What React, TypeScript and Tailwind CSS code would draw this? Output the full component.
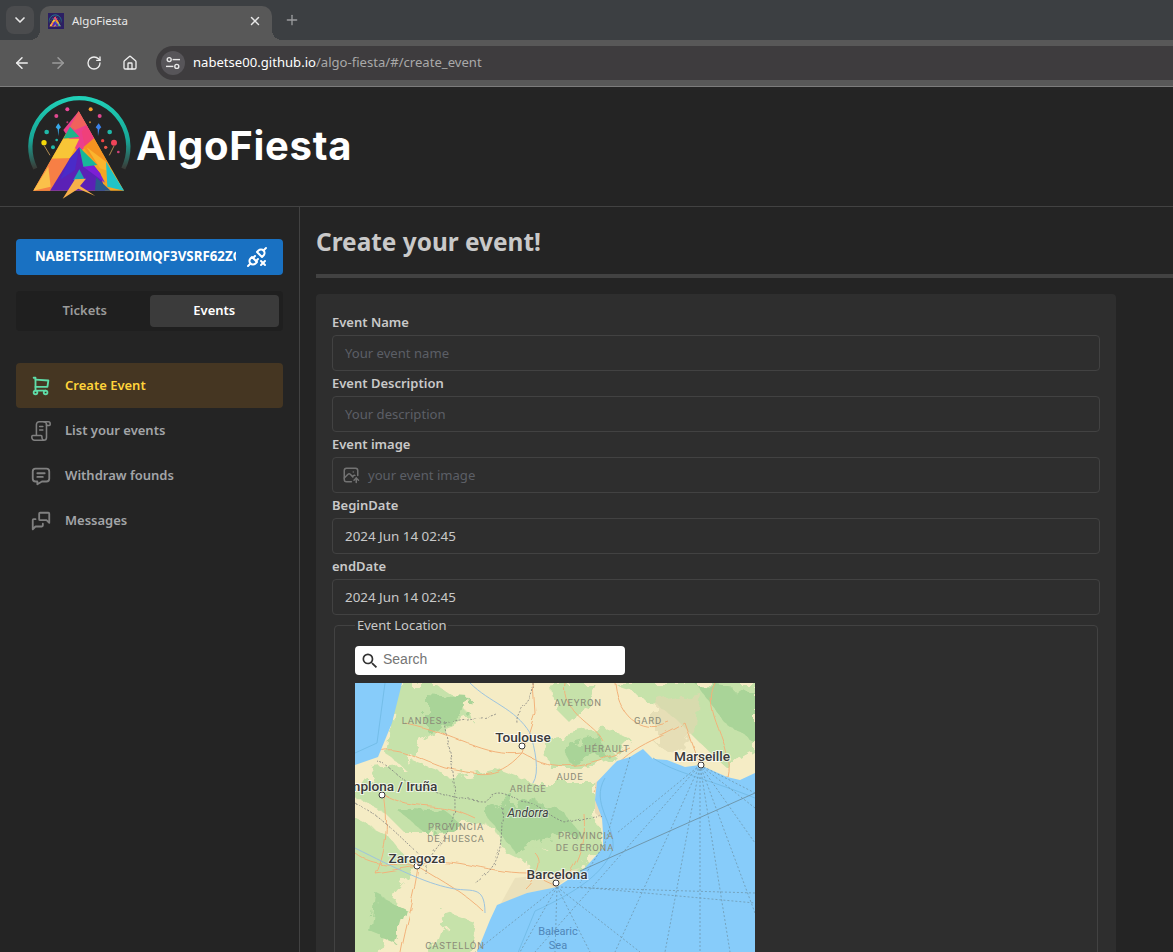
import React from 'react';
import { ArrowLeft, ArrowRight, ChevronDown, Home, Plus, RotateCw, X } from 'lucide-react';
import { MdSearch } from 'react-icons/md';
import { TbMessage, TbMessages, TbPhotoUp, TbPlugConnectedX, TbShoppingCart } from 'react-icons/tb';

const LogoMark: React.FC<{ className?: string }> = ({ className }) => (
  <svg viewBox="0 0 390 345" className={className}>
    <defs>
      <linearGradient id="arc" x1="0" y1="0" x2="0" y2="1">
        <stop offset="0" stopColor="#20d0b8" />
        <stop offset="0.6" stopColor="#17a596" />
        <stop offset="1" stopColor="#3a3a36" />
      </linearGradient>
    </defs>
    <path d="M46 236 A147 147 0 1 1 310 236" fill="none" stroke="url(#arc)" strokeWidth="13" />
    {/* confetti */}
    <circle cx="142" cy="58" r="6" fill="#ec4899" />
    <circle cx="212" cy="58" r="6" fill="#f59e2b" />
    <circle cx="109" cy="78" r="6" fill="#e0488f" />
    <circle cx="239" cy="78" r="6" fill="#e0488f" />
    <circle cx="142" cy="97" r="3" fill="#c03878" />
    <circle cx="210" cy="97" r="3" fill="#c08030" />
    <circle cx="80" cy="126" r="7" fill="#20b8a8" />
    <circle cx="269" cy="126" r="7" fill="#20b8a8" />
    <circle cx="110" cy="150" r="4" fill="#20b8a8" />
    <circle cx="248" cy="152" r="5" fill="#ef4444" />
    <circle cx="99" cy="172" r="6" fill="#20b8a8" />
    <circle cx="257" cy="172" r="5" fill="#ef5a4a" />
    <circle cx="295" cy="186" r="4" fill="#d0407a" />
    <circle cx="72" cy="158" r="8" fill="#f5d90a" />
    <circle cx="282" cy="158" r="9" fill="#ef4458" />
    <path d="M72 166 L90 196 M282 168 L268 196" stroke="#b08a50" strokeWidth="3" />
    <path d="M115 100 l8 12 l-6 6 l-2 20 l-2 -20 l-6 -6z" fill="#38a8e8" />
    <path d="M236 100 l8 12 l-6 6 l-4 20 l-1 -20 l-6 -6z" fill="#3b82e8" />
    {/* triangle */}
    <polygon points="176,64 312,302 40,302" fill="#f5a623" />
    <polygon points="176,64 222,145 176,190 130,120" fill="#ec3f8c" />
    <polygon points="176,64 200,105 165,120 150,110" fill="#f0625c" />
    <polygon points="200,105 222,145 195,170 185,125" fill="#f0407a" />
    <polygon points="150,110 178,140 130,146" fill="#1fb58a" />
    <polygon points="130,146 178,146 150,205 95,206" fill="#f8c537" />
    <polygon points="95,206 150,205 120,302 40,302" fill="#f77f45" />
    <polygon points="40,302 92,290 85,230" fill="#fbc04a" />
    <polygon points="178,172 240,250 255,302 90,302 150,205" fill="#5b21b6" />
    <polygon points="150,205 178,172 165,240 120,270" fill="#4a2bc8" />
    <polygon points="178,172 190,230 255,278 240,250" fill="#7c1fd6" />
    <polygon points="178,172 232,225 190,230" fill="#18b79a" />
    <polygon points="222,145 270,230 232,225 190,172" fill="#f59320" />
    <polygon points="200,172 258,215 270,245 240,235" fill="#fbb52e" />
    <polygon points="258,215 312,302 262,290" fill="#20c4c8" />
    <polygon points="228,262 272,302 225,302" fill="#2c5a8c" />
    <polygon points="178,238 195,270 160,270" fill="#1f9fb0" />
    <polygon points="165,268 198,266 180,288 226,318 175,296 128,326" fill="#f8b04a" />
  </svg>
);

const SiteTune = () => (
  <svg viewBox="0 0 16 16" className="w-4 h-4" fill="none" stroke="#e8e8e8" strokeWidth="1.4">
    <circle cx="4.2" cy="4.6" r="2" />
    <path d="M7.6 4.6H15" />
    <circle cx="11.8" cy="11.4" r="2" />
    <path d="M1 11.4h7.4" />
  </svg>
);

const ScrollIcon: React.FC<{ className?: string }> = ({ className }) => (
  <svg viewBox="0 0 24 24" className={className} fill="none" stroke="currentColor" strokeWidth="1.7" strokeLinecap="round" strokeLinejoin="round">
    <path d="M18 5v14a3 3 0 0 1-3 3H5a3 3 0 0 1-3-3v-1a1 1 0 0 1 1-1h9a1 1 0 0 1 1 1v1a3 3 0 0 0 2 3" />
    <path d="M7 16V5a3 3 0 0 1 3-3h10a2 2 0 0 1 2 2v1a1 1 0 0 1-1 1h-3" />
    <path d="M18 5a3 3 0 0 0-3-3" />
    <path d="M10.5 7H14M10.5 11H14" />
  </svg>
);

const BrowserChrome = () => (
  <div className="shrink-0 font-['Noto_Sans',sans-serif]">
    <div className="h-10 bg-[#3c3f42] flex pt-1.5 pl-1.5">
      <div className="w-7 h-7 rounded-lg bg-[#4b4c4e] flex items-center justify-center">
        <ChevronDown className="w-4 h-4 text-[#e8e8e8]" strokeWidth={2.5} />
      </div>
      <div className="relative ml-1.5 w-[232px] h-[34px] bg-[#585858] rounded-t-[10px] flex items-center pl-2 pr-2.5 pb-1 before:absolute before:-left-2.5 before:bottom-0 before:w-2.5 before:h-2.5 before:bg-[radial-gradient(circle_at_0_0,transparent_10px,#585858_10px)] after:absolute after:-right-2.5 after:bottom-0 after:w-2.5 after:h-2.5 after:bg-[radial-gradient(circle_at_100%_0,transparent_10px,#585858_10px)]">
        <div className="w-4 h-4 bg-[#2b1f63] flex items-center justify-center">
          <LogoMark className="w-4 h-4" />
        </div>
        <span className="ml-2 text-[11.5px] text-[#e8e8e8]">AlgoFiesta</span>
        <X className="ml-auto w-3.5 h-3.5 text-[#e8e8e8]" strokeWidth={2.5} />
      </div>
      <Plus className="ml-[12px] mt-1.5 w-4 h-4 text-[#9a9c9e]" strokeWidth={2} />
    </div>
    <div className="h-[47px] bg-[#585858] border-b border-[#7c7c7c] flex items-center pl-1">
      <div className="w-9 flex justify-center"><ArrowLeft className="w-[18px] h-[18px] text-[#eeeeee]" strokeWidth={2} /></div>
      <div className="w-9 flex justify-center"><ArrowRight className="w-[18px] h-[18px] text-[#9a9a9a]" strokeWidth={2} /></div>
      <div className="w-9 flex justify-center"><RotateCw className="w-4 h-4 text-[#eeeeee]" strokeWidth={2} /></div>
      <div className="w-9 flex justify-center"><Home className="w-4 h-4 text-[#eeeeee]" strokeWidth={2} /></div>
      <div className="ml-2 flex-1 h-[34px] bg-[#3e3c3e] rounded-l-full flex items-center pl-[5px]">
        <div className="w-6 h-6 rounded-full bg-[#575559] flex items-center justify-center">
          <SiteTune />
        </div>
        <span className="ml-2 text-[13.1px] text-white">nabetse00.github.io<span className="text-[#a9a9a9]">/algo-fiesta/#/create_event</span></span>
      </div>
    </div>
  </div>
);

const SideNav = () => {
  const items = [
    { label: 'Create Event', icon: TbShoppingCart, active: true },
    { label: 'List your events', icon: ScrollIcon },
    { label: 'Withdraw founds', icon: TbMessage },
    { label: 'Messages', icon: TbMessages },
  ];

  return (
    <aside className="w-[300px] shrink-0 border-r border-[#424242] px-4 pt-8 bg-[#242424]">
      <div className="h-9 bg-[#1971c2] rounded flex items-center pl-[19px] pr-[14px]">
        <span className="w-[201px] overflow-hidden whitespace-nowrap text-[13.3px] font-bold text-white">NABETSEIIMEOIMQF3VSRF62ZGW4</span>
        <TbPlugConnectedX className="ml-auto w-6 h-6 text-white" />
      </div>
      <div className="mt-4 h-10 bg-[#1f1f1f] rounded p-1 flex text-[13px] font-semibold">
        <div className="flex-1 flex items-center justify-center text-[#9b9b9b]">Tickets</div>
        <div className="flex-1 flex items-center justify-center text-white bg-[#3b3b3b] rounded">Events</div>
      </div>
      <nav className="mt-8">
        {items.map((item) => (
          <div
            key={item.label}
            className={`h-[45px] rounded flex items-center pl-[14px] text-[13px] font-semibold ${
              item.active ? 'bg-[#453622] text-[#ffd43b]' : 'text-[#a3a5a8]'
            }`}
          >
            <item.icon className={`w-[22px] h-[22px] ${item.active ? 'text-[#5fdca8]' : 'text-[#808080]'}`} />
            <span className="ml-[13px]">{item.label}</span>
          </div>
        ))}
      </nav>
    </aside>
  );
};

const Field: React.FC<{ label: string; placeholder?: string; value?: string; icon?: boolean }> = ({ label, placeholder, value, icon }) => (
  <div>
    <div className="h-[25px] flex items-center text-[13px] font-semibold text-[#c9c9c9]">{label}</div>
    <div className="h-9 border border-[#424242] rounded flex items-center pl-3">
      {icon && <TbPhotoUp className="w-[18px] h-[18px] mr-2 -ml-[3px] text-[#737373]" />}
      {value ? <span className="text-[13.4px] text-[#c9c9c9]">{value}</span> : <span className="pt-px text-[13.1px] text-[#5c5f66]">{placeholder}</span>}
    </div>
  </div>
);

const Label: React.FC<{ x: number; y: number; children: string; kind?: 'city' | 'region' | 'italic' | 'sea' }> = ({ x, y, children, kind = 'region' }) => {
  if (kind === 'city') {
    return <text x={x} y={y} textAnchor="middle" fontSize="13.6" fontWeight="500" fill="#3a3a3a" stroke="#ffffff" strokeOpacity="0.7" strokeWidth="2" paintOrder="stroke">{children}</text>;
  }
  if (kind === 'italic') {
    return <text x={x} y={y} textAnchor="middle" fontSize="12" fontStyle="italic" fill="#3e3e3e" stroke="#ffffff" strokeOpacity="0.5" strokeWidth="2" paintOrder="stroke">{children}</text>;
  }
  if (kind === 'sea') {
    return <text x={x} y={y} textAnchor="middle" fontSize="11" fill="#4f86b8">{children}</text>;
  }
  return <text x={x} y={y} textAnchor="middle" fontSize="9.5" letterSpacing="0.8" fill="#8b8b78">{children}</text>;
};

const MapView = () => {
  const ferries = [
    'M345 82 L400 110', 'M345 82 L400 125', 'M345 82 L400 160', 'M345 82 L400 230', 'M345 82 L375 269',
    'M345 82 L345 269', 'M345 82 L310 269', 'M345 82 L260 269', 'M345 82 L180 269', 'M345 82 L262 150',
    'M275 74 L250 160 L225 200', 'M202 204 L165 269', 'M202 204 L200 269', 'M202 204 L235 269', 'M202 204 L285 269',
    'M202 204 L400 210', 'M225 204 L400 220', 'M202 204 L120 269',
  ];
  const roads = [
    'M167 70 C130 75 100 50 50 40', 'M167 70 C140 100 120 90 90 85 C60 75 40 60 20 70', 'M167 70 C200 90 230 85 275 65',
    'M167 70 L180 30 L178 0', 'M28 111 C35 150 25 180 20 190 L63 183',
    'M63 183 C90 170 130 190 172 190 L202 204', 'M63 183 C60 210 50 240 45 269', 'M63 183 C90 200 110 210 130 230',
    'M228 130 C230 160 225 180 205 200', 'M28 111 C60 130 80 115 120 135', 'M240 110 C270 60 300 60 330 40 L345 82',
    'M260 0 C265 40 290 50 315 40', 'M360 0 C345 30 380 60 372 94', 'M0 170 C20 185 40 180 63 183',
    'M180 170 C190 180 180 195 170 205', 'M210 0 C205 30 240 40 250 60',
  ];
  const borders = [
    'M22 78 C40 85 45 100 70 105 C90 112 110 118 130 118 C140 105 150 110 165 118 C185 120 190 132 210 140 C230 135 245 130 248 135',
    'M90 40 C110 35 130 35 140 30', 'M90 40 C95 70 100 90 100 125 C95 160 70 170 70 190',
    'M148 125 C145 160 150 180 120 200', 'M0 120 C30 135 45 155 63 170', 'M178 0 C180 20 160 25 162 40',
  ];

  return (
    <div className="mt-2 w-[400px] h-[400px] bg-[#f5ecc5]">
      <svg viewBox="0 0 400 400" className="w-full h-full block font-['Roboto',sans-serif]">
        <defs>
          <filter id="rough" x="-10%" y="-10%" width="120%" height="120%">
            <feTurbulence type="fractalNoise" baseFrequency="0.07" numOctaves="3" seed="4" />
            <feDisplacementMap in="SourceGraphic" scale="20" />
          </filter>
          <filter id="wiggle" x="-10%" y="-10%" width="120%" height="120%">
            <feTurbulence type="fractalNoise" baseFrequency="0.05" numOctaves="2" seed="9" />
            <feDisplacementMap in="SourceGraphic" scale="6" />
          </filter>
        </defs>
        {/* vegetation */}
        <g fill="#c6e2aa" filter="url(#rough)">
          <polygon points="40,0 80,0 110,20 115,35 90,45 65,60 50,85 30,70" />
          <polygon points="260,0 400,0 400,70 372,85 345,60 320,35 300,20 275,10" />
          <polygon points="195,0 240,0 230,25 215,40 200,25" />
          <polygon points="190,55 255,45 275,55 255,75 225,85 195,85" />
          <polygon points="20,85 60,80 100,95 140,85 180,100 240,100 240,135 245,150 250,170 225,185 190,165 170,180 150,170 140,145 110,135 90,150 50,150 30,130 0,115" />
          <polygon points="-10,130 30,150 60,185 40,210 20,290 70,290 90,230 120,240 110,290 -10,290" />
          <polygon points="170,165 235,170 225,190 195,195 175,190" />
        </g>
        <g fill="#a9d498" filter="url(#rough)">
          <polygon points="72,12 115,15 112,30 90,42 72,50" />
          <polygon points="130,130 160,115 205,125 225,150 190,155 160,170 145,150" />
          <polygon points="40,125 90,128 110,145 70,150" />
          <polygon points="205,62 245,52 252,70 215,80" />
          <polygon points="340,0 400,10 400,60 370,40" />
          <polygon points="20,210 50,225 40,260 15,250" />
        </g>
        <polygon points="240,100 262,82 270,75 250,120 252,140 240,130" fill="#ead9b5" />
        <polygon points="300,20 345,10 340,50 320,70 300,60" fill="#e0d9b0" opacity="0.7" filter="url(#rough)" />
        <polygon points="200,205 172,210 145,222 160,195 205,190 225,185" fill="#e8dfb8" opacity="0.8" />
        <g fill="none" stroke="#f2b27a" strokeWidth="1" filter="url(#wiggle)">
          {roads.map((d) => <path key={d} d={d} />)}
        </g>
        <path d="M115 0 C135 20 160 25 175 50 C180 65 185 90 178 100 M0 165 C40 185 70 200 95 205 C115 210 130 200 130 230" fill="none" stroke="#9dc4df" strokeWidth="1" />
        {/* water */}
        <polygon points="0,0 47,0 37,40 23,74 0,82" fill="#87ccfa" />
        <polygon points="400,90 385,97 372,94 345,82 330,84 312,77 298,76 288,66 275,74 262,78 258,82 242,99 240,117 247,135 248,150 248,165 228,187 202,204 172,210 142,222 135,237 122,269 110,400 400,400" fill="#87ccfa" />
        <path d="M30 0 L22 60 L0 70 M298 75 C320 90 350 95 400 115 M250 95 C235 120 260 140 258 165 C250 190 220 210 180 228 L110 400" fill="none" stroke="#74bde8" strokeWidth="1" />
        <g fill="none" stroke="#6f98ae" strokeWidth="0.8" strokeDasharray="2 2">
          {ferries.map((d) => <path key={d} d={d} />)}
        </g>
        <path d="M400 110 L225 188" fill="none" stroke="#6f98ae" strokeWidth="1" />
        <g fill="none" stroke="#7a7a7a" strokeWidth="1" strokeDasharray="2 1.5" opacity="0.75" filter="url(#wiggle)">
          {borders.map((d) => <path key={d} d={d} />)}
        </g>
        <g fill="#ffffff" stroke="#3a3a3a" strokeWidth="1">
          <circle cx="167" cy="63" r="3" />
          <circle cx="346" cy="82" r="3" />
          <circle cx="27" cy="112" r="3" />
          <circle cx="62" cy="183" r="3" />
          <circle cx="201" cy="200" r="3" />
        </g>
        <Label x={223} y={23}>AVEYRON</Label>
        <Label x={293} y={41}>GARD</Label>
        <Label x={67} y={41}>LANDES</Label>
        <Label x={252} y={69}>HÉRAULT</Label>
        <Label x={215} y={97}>AUDE</Label>
        <Label x={173} y={109}>ARIÈGE</Label>
        <Label x={101} y={147}>PROVINCIA</Label>
        <Label x={101} y={159}>DE HUESCA</Label>
        <Label x={231} y={156}>PROVINCIA</Label>
        <Label x={230} y={168}>DE GERONA</Label>
        <Label x={100} y={266}>CASTELLÓN</Label>
        <Label x={168} y={59} kind="city">Toulouse</Label>
        <Label x={347} y={78} kind="city">Marseille</Label>
        <Label x={30} y={108} kind="city">Pamplona / Iruña</Label>
        <Label x={62} y={180} kind="city">Zaragoza</Label>
        <Label x={202} y={196} kind="city">Barcelona</Label>
        <Label x={173} y={134} kind="italic">Andorra</Label>
        <Label x={203} y={252} kind="sea">Balearic</Label>
        <Label x={203} y={266} kind="sea">Sea</Label>
      </svg>
    </div>
  );
};

const CreateEvent = () => (
  <main className="flex-1 min-w-0 pt-4 pl-4 overflow-hidden">
    <h1 className="h-[38px] flex items-center text-[24.4px] font-bold text-[#c9c9c9]">Create your event!</h1>
    <div className="mt-[13px] h-1 bg-[#424242]" />
    <section className="mt-4 w-[800px] bg-[#2e2e2e] rounded pt-4 px-4">
      <Field label="Event Name" placeholder="Your event name" />
      <Field label="Event Description" placeholder="Your description" />
      <Field label="Event image" placeholder="your event image" icon />
      <Field label="BeginDate" value="2024 Jun 14 02:45" />
      <Field label="endDate" value="2024 Jun 14 02:45" />
      <fieldset className="mx-[2px] border border-[#424242] rounded pl-5 pr-5 pt-[11px]">
        <legend className="px-[2px] text-[13px] leading-[20px] text-[#c9c9c9]">Event Location</legend>
        <div className="w-[270px] h-[29px] bg-white rounded flex items-center pl-[6px] font-['Liberation_Sans',sans-serif]">
          <MdSearch className="w-[20px] h-[20px] -ml-px text-[#333333]" />
          <span className="ml-[3px] -mt-[3px] text-sm text-[#757575]">Search</span>
        </div>
        <MapView />
      </fieldset>
    </section>
  </main>
);

export default function App() {
  return (
    <div className="h-screen overflow-hidden flex flex-col bg-[#242424] font-['Noto_Sans',sans-serif]">
      <BrowserChrome />
      <header className="h-[120px] shrink-0 border-b border-[#424242] flex items-start pl-5 pt-[3px]">
        <LogoMark className="w-[130px] h-[115px]" />
        <span className="-ml-[14px] mt-[28px] text-[40px] leading-[56px] font-bold text-white font-['Inter',sans-serif] tracking-[0.7px]">AlgoFiesta</span>
      </header>
      <div className="flex-1 min-h-0 flex">
        <SideNav />
        <CreateEvent />
      </div>
    </div>
  );
}
